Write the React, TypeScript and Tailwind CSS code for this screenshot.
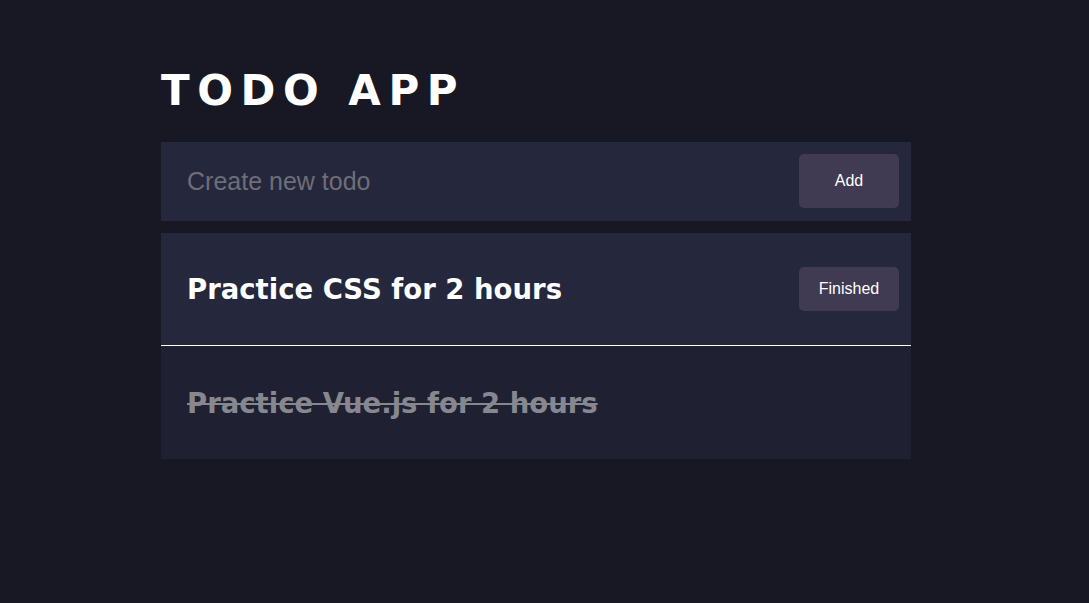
import { useState } from 'react';

const heading = { fontFamily: '"DejaVu Sans", "Noto Sans", sans-serif' };
const body = { fontFamily: '"Liberation Sans", Arial, sans-serif' };

type Todo = { id: number; text: string; done: boolean };

export default function App() {
  const [todos] = useState<Todo[]>([
    { id: 1, text: 'Practice CSS for 2 hours', done: false },
    { id: 2, text: 'Practice Vue.js for 2 hours', done: true },
  ]);

  return (
    <div className="min-h-[603px] bg-[#181824] pl-[161px] pt-[68px]">
      <div className="w-[750px]">
        <h1
          className="text-[42px] font-bold leading-[46px] tracking-[0.18em] text-white"
          style={heading}
        >
          TODO APP
        </h1>

        <div className="mt-[28px] flex h-[79px] items-center justify-between bg-[#25273c] pl-[26px] pr-[12px]">
          <input
            placeholder="Create new todo"
            className="w-[500px] bg-transparent text-[25px] text-white outline-none placeholder:text-[#6e6e78]"
            style={body}
          />
          <button
            className="mb-[2px] h-[54px] w-[100px] rounded-[5px] bg-[#403a52] text-[16px] text-white"
            style={body}
          >
            Add
          </button>
        </div>

        <ul className="mt-[12px]">
          {todos.map((todo) =>
            todo.done ? (
              <li
                key={todo.id}
                className="flex h-[113px] items-center bg-[#1f2032] pl-[26px]"
              >
                <span
                  className="mt-[4px] text-[27.5px] font-bold text-[#87878f] line-through"
                  style={heading}
                >
                  {todo.text}
                </span>
              </li>
            ) : (
              <li
                key={todo.id}
                className="flex h-[112.5px] items-center justify-between border-b border-white bg-[#25273c] pl-[26px] pr-[12px]"
              >
                <span className="mt-[2px] text-[27.5px] font-bold text-white" style={heading}>
                  {todo.text}
                </span>
                <button
                  className="h-[44px] w-[100px] rounded-[5px] bg-[#403a52] text-[16px] text-white"
                  style={body}
                >
                  Finished
                </button>
              </li>
            )
          )}
        </ul>
      </div>
    </div>
  );
}
